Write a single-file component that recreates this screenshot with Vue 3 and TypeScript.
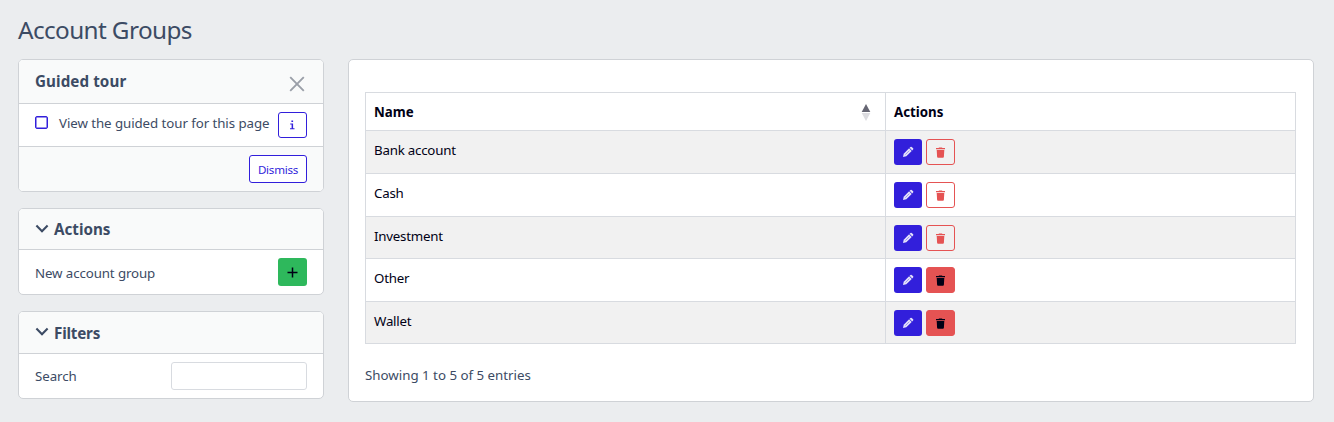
<script setup lang="ts">
import { ref } from 'vue'

interface AccountGroup {
  name: string
  deletable: boolean
  height: number
}

const groups: AccountGroup[] = [
  { name: 'Bank account', deletable: false, height: 43 },
  { name: 'Cash', deletable: false, height: 43 },
  { name: 'Investment', deletable: false, height: 42 },
  { name: 'Other', deletable: true, height: 43 },
  { name: 'Wallet', deletable: true, height: 42 },
]
const search = ref('')
</script>

<template>
  <main class="page">
    <h1 class="title"><span>Account Groups</span></h1>
    <div class="columns">
      <aside class="sidebar">
        <section class="card">
          <header class="card-head tour-head">
            <h2>Guided tour</h2>
            <button class="close" aria-label="Close">
              <svg width="16" height="16" viewBox="0 0 16 16"><path d="M1.2 1.2 14.8 14.8M14.8 1.2 1.2 14.8" stroke="#9a9fa8" stroke-width="1.9" fill="none" /></svg>
            </button>
          </header>
          <div class="card-row tour-row">
            <span class="box"></span>
            <span class="label tour-label">View the guided tour for this page</span>
            <button class="btn info" aria-label="Info">
              <svg width="7" height="10" viewBox="0 0 7 10"><path d="M2.4.6h1.7v1.5H2.4zM1.2 3.6h2.9v4.7h1.4v.9H1v-.9h1.6V4.5H1.2z" fill="#321fdb" /></svg>
            </button>
          </div>
          <footer class="card-foot">
            <button class="btn dismiss"><span>Dismiss</span></button>
          </footer>
        </section>

        <section class="card">
          <header class="card-head">
            <svg class="chevron" width="14" height="10" viewBox="0 0 14 10"><path d="M1.4 1.6 7 7.2 12.6 1.6" stroke="#3c4b64" stroke-width="2.1" fill="none" /></svg>
            <h2>Actions</h2>
          </header>
          <div class="card-row action-row">
            <span class="label new-label">New account group</span>
            <button class="btn add" aria-label="New account group">
              <svg width="11" height="11" viewBox="0 0 11 11"><path d="M5.5.5v10M.5 5.5h10" stroke="#000015" stroke-width="1.5" /></svg>
            </button>
          </div>
        </section>

        <section class="card filters">
          <header class="card-head filter-head">
            <svg class="chevron" width="14" height="10" viewBox="0 0 14 10"><path d="M1.4 1.6 7 7.2 12.6 1.6" stroke="#3c4b64" stroke-width="2.1" fill="none" /></svg>
            <h2 class="filter-title">Filters</h2>
          </header>
          <div class="card-row action-row">
            <span class="label">Search</span>
            <input v-model="search" class="search" type="text" aria-label="Search" />
          </div>
        </section>
      </aside>

      <section class="card content">
        <div class="table">
          <div class="row head">
            <div class="cell">
              <span class="th-name">Name</span>
              <svg class="sort" width="10" height="17" viewBox="0 0 10 17"><path d="M5 0 9.3 8H.7z" fill="#666673" /><path d="M5 17 9.3 9H.7z" fill="#dcdce0" /></svg>
            </div>
            <div class="cell"><span>Actions</span></div>
          </div>
          <div v-for="group in groups" :key="group.name" class="row" :style="{ height: group.height + 'px' }">
            <div class="cell"><span>{{ group.name }}</span></div>
            <div class="cell actions">
              <button class="btn edit" aria-label="Edit">
                <svg width="12" height="12" viewBox="0 0 12 12">
                  <path d="M7.1 2.3 9.7 4.9 4.3 10.3 1 11 1.7 7.7z" fill="#e4e1fa" />
                  <path d="M7.6 1.8 8.5.9Q9.1.4 9.7.9L11.1 2.3Q11.6 2.9 11.1 3.5L10.2 4.4z" fill="#e4e1fa" />
                  <path d="M3.4 8.6 7.3 4.7" stroke="#6e62e5" stroke-width=".6" />
                </svg>
              </button>
              <button class="btn trash" :class="{ solid: group.deletable }" aria-label="Delete">
                <svg width="9" height="11" viewBox="0 0 9 11"><path d="M3 .4h3l.4.6H9v1.3H0V1h2.6zM.7 3h7.6l-.4 6.8q-.1.9-.9.9H2q-.8 0-.9-.9z" fill="currentColor" /></svg>
              </button>
            </div>
          </div>
        </div>
        <p class="summary">Showing 1 to 5 of 5 entries</p>
      </section>
    </div>
  </main>
</template>

<style>
body {
  background: #ebedef;
}
</style>

<style scoped>
* {
  box-sizing: border-box;
}
.page {
  height: 422px;
  padding: 0 20px 0 18px;
  background: #ebedef;
  color: #3c4b64;
  font-family: "Noto Sans", "Open Sans", sans-serif;
  font-size: 13.3px;
  line-height: 20px;
  overflow: hidden;
}
h1, h2, p {
  margin: 0;
}
.title {
  height: 59px;
  padding-top: 13px;
  font-size: 24.3px;
  font-weight: 400;
  letter-spacing: -0.6px;
  line-height: 34px;
}
.columns {
  display: grid;
  grid-template-columns: 306px 966px;
  column-gap: 24px;
  align-items: start;
}
.card {
  background: #fff;
  border: 1px solid #cfd2d6;
  border-radius: 5px;
  overflow: hidden;
}
.sidebar {
  display: flex;
  flex-direction: column;
  gap: 16px;
}
.card-head {
  display: flex;
  align-items: center;
  height: 41px;
  padding: 0 16px;
  background: #f9fafa;
  border-bottom: 1px solid #cfd2d6;
}
.card-head h2 {
  font-size: 15.2px;
  font-weight: 700;
  line-height: 22px;
}
.card-head .filter-title {
  letter-spacing: -0.2px;
}
.tour-head {
  height: 44px;
  justify-content: space-between;
}
.tour-head h2 {
  margin-bottom: 1px;
  letter-spacing: 0.08px;
}
.filter-head {
  height: 42px;
}
.chevron {
  margin: 0 5px 1px 0;
}
.btn {
  display: flex;
  align-items: center;
  justify-content: center;
  padding: 0;
  border: 1px solid transparent;
  border-radius: 3px;
  font-family: inherit;
}
.close {
  display: flex;
  padding: 0;
  margin: 5px 2px 0 0;
  border: 0;
  background: none;
}
.card-row {
  display: flex;
  padding: 0 16px;
}
.tour-row {
  height: 43px;
  padding-top: 8px;
  border-bottom: 1px solid #cfd2d6;
}
.box {
  width: 13px;
  height: 13px;
  margin: 4px 11px 0 0;
  border: 1px solid #321fdb;
  box-shadow: inset 0 0 0 0.5px #321fdb;
  border-radius: 2px;
}
.label {
  letter-spacing: -0.07px;
  white-space: nowrap;
}
.new-label {
  padding-top: 1px;
  letter-spacing: -0.11px;
}
.tour-label {
  padding-top: 1px;
}
.info {
  width: 29px;
  height: 26px;
  margin-left: auto;
  background: #fff;
  border-color: #321fdb;
}
.card-foot {
  display: flex;
  justify-content: flex-end;
  height: 44px;
  padding: 8px 16px;
  background: #f9fafa;
}
.dismiss {
  width: 58px;
  height: 28px;
  background: #fff;
  border-color: #321fdb;
  color: #321fdb;
  font-size: 11.6px;
  letter-spacing: -0.25px;
}
.action-row {
  height: 44px;
  align-items: center;
  justify-content: space-between;
}
.add {
  width: 29px;
  height: 28px;
  background: #2eb85c;
}
.search {
  width: 136px;
  height: 28px;
  border: 1px solid #d8dbe0;
  border-radius: 3px;
  outline: 0;
}
.content {
  height: 343px;
  padding: 32px 17px 0 16px;
}
.table {
  border: 1px solid #d8dbe0;
  border-bottom: 0;
  color: #000015;
}
.row {
  display: grid;
  grid-template-columns: 520px 1fr;
  border-bottom: 1px solid #d8dbe0;
  letter-spacing: -0.22px;
}
.row:nth-child(even) {
  background: #f1f1f1;
}
.head {
  height: 38px;
  font-weight: 700;
  letter-spacing: 0;
}
.cell {
  display: flex;
  justify-content: space-between;
  padding: 9px 8px 0;
}
.cell:first-child {
  border-right: 1px solid #d8dbe0;
}
.sort {
  margin: 2px 6px 0 0;
}
.actions {
  justify-content: flex-start;
  padding-top: 8px;
  gap: 4px;
}
.actions .btn {
  height: 26px;
}
.edit {
  width: 28px;
  background: #321fdb;
}
.trash {
  width: 29px;
  background: transparent;
  border-color: #e55353;
  color: #e55353;
}
.trash.solid {
  background: #e55353;
  color: #000015;
}
.summary {
  margin-top: 21px;
}
</style>
